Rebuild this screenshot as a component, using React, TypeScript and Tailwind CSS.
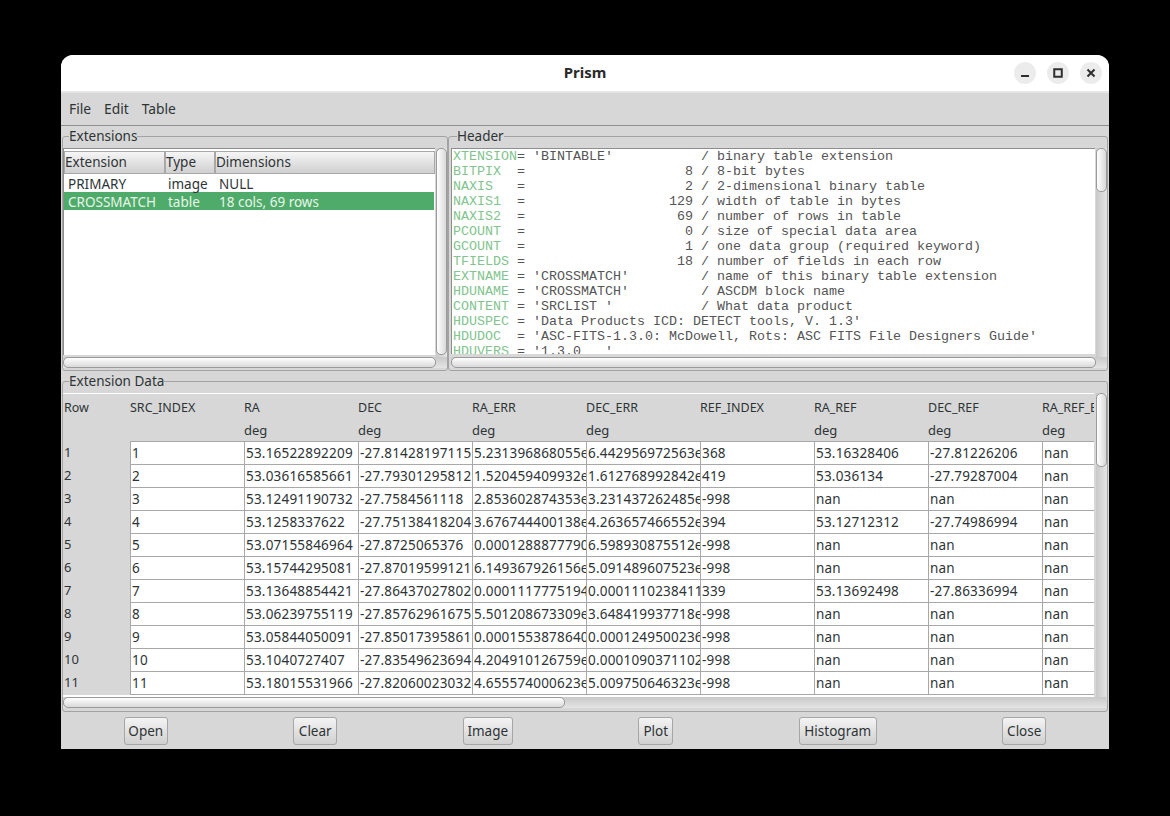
import React from "react";

const hdr: [string, string][] = [
  ["XTENSION", "= 'BINTABLE'           / binary table extension"],
  ["BITPIX  ", "=                    8 / 8-bit bytes"],
  ["NAXIS   ", "=                    2 / 2-dimensional binary table"],
  ["NAXIS1  ", "=                  129 / width of table in bytes"],
  ["NAXIS2  ", "=                   69 / number of rows in table"],
  ["PCOUNT  ", "=                    0 / size of special data area"],
  ["GCOUNT  ", "=                    1 / one data group (required keyword)"],
  ["TFIELDS ", "=                   18 / number of fields in each row"],
  ["EXTNAME ", "= 'CROSSMATCH'         / name of this binary table extension"],
  ["HDUNAME ", "= 'CROSSMATCH'         / ASCDM block name"],
  ["CONTENT ", "= 'SRCLIST '           / What data product"],
  ["HDUSPEC ", "= 'Data Products ICD: DETECT tools, V. 1.3'"],
  ["HDUDOC  ", "= 'ASC-FITS-1.3.0: McDowell, Rots: ASC FITS File Designers Guide'"],
  ["HDUVERS ", "= '1.3.0   '"],
];

const cols = ["SRC_INDEX", "RA", "DEC", "RA_ERR", "DEC_ERR", "REF_INDEX", "RA_REF", "DEC_REF", "RA_REF_ERR"];
const units = ["", "deg", "deg", "deg", "deg", "", "deg", "deg", "deg"];

const rows: string[][] = [
  ["1", "53.16522892209", "-27.81428197115", "5.231396868055e-05", "6.442956972563e-05", "368", "53.16328406", "-27.81226206", "nan"],
  ["2", "53.03616585661", "-27.79301295812", "1.520459409932e-05", "1.612768992842e-05", "419", "53.036134", "-27.79287004", "nan"],
  ["3", "53.12491190732", "-27.7584561118", "2.853602874353e-05", "3.231437262485e-05", "-998", "nan", "nan", "nan"],
  ["4", "53.1258337622", "-27.75138418204", "3.676744400138e-05", "4.263657466552e-05", "394", "53.12712312", "-27.74986994", "nan"],
  ["5", "53.07155846964", "-27.8725065376", "0.000128887779000", "6.598930875512e-05", "-998", "nan", "nan", "nan"],
  ["6", "53.15744295081", "-27.87019599121", "6.149367926156e-05", "5.091489607523e-05", "-998", "nan", "nan", "nan"],
  ["7", "53.13648854421", "-27.86437027802", "0.000111777519400", "0.000111023841100", "339", "53.13692498", "-27.86336994", "nan"],
  ["8", "53.06239755119", "-27.85762961675", "5.501208673309e-05", "3.648419937718e-05", "-998", "nan", "nan", "nan"],
  ["9", "53.05844050091", "-27.85017395861", "0.000155387864000", "0.000124950023600", "-998", "nan", "nan", "nan"],
  ["10", "53.1040727407", "-27.83549623694", "4.204910126759e-05", "0.000109037110200", "-998", "nan", "nan", "nan"],
  ["11", "53.18015531966", "-27.82060023032", "4.655574000623e-05", "5.009750646323e-05", "-998", "nan", "nan", "nan"],
];

const buttons: [string, string][] = [
  ["Open", "w-[44px]"],
  ["Clear", "w-[44px]"],
  ["Image", "w-[50px]"],
  ["Plot", "w-[35px]"],
  ["Histogram", "w-[78px]"],
  ["Close", "w-[44px]"],
];

function VBar({ thumb }: { thumb: string }) {
  return (
    <div className="w-[11px] shrink-0 bg-gradient-to-r from-[#c9c9c9] to-[#e4e4e4]">
      <div className={`${thumb} w-[11px] rounded-[5px] border border-[#9a9a9a] bg-gradient-to-r from-[#ffffff] to-[#d9d9d9]`} />
    </div>
  );
}

function HBar({ thumb }: { thumb: string }) {
  return (
    <div className="h-[11px] bg-gradient-to-b from-[#c9c9c9] to-[#e4e4e4]">
      <div className={`${thumb} h-[11px] rounded-[5px] border border-[#9a9a9a] bg-gradient-to-b from-[#ffffff] to-[#d9d9d9]`} />
    </div>
  );
}

function HeadCell({ w, children }: { w: string; children: React.ReactNode }) {
  return (
    <div className={`${w} shrink-0 h-[23px] leading-[21px] border border-[#a8a8a8] bg-gradient-to-b from-[#f6f6f6] to-[#cfcfcf]`}>
      {children}
    </div>
  );
}

function WinBtn({ children }: { children: React.ReactNode }) {
  return (
    <div className="w-[22px] h-[22px] rounded-full bg-[#ececec] flex items-center justify-center">{children}</div>
  );
}

function Btn({ label, w }: { label: string; w: string }) {
  return (
    <div className={`${w} h-[28px] flex items-center justify-center rounded-[3px] border border-[#a6a6a6] bg-gradient-to-b from-[#f4f4f4] to-[#d0d0d0] text-[13.5px]`}>
      {label}
    </div>
  );
}

export default function App() {
  return (
    <div className="w-[1170px] h-[816px] bg-black pt-[55px] pl-[61px] overflow-hidden font-['Noto_Sans',sans-serif] text-[13.5px] text-[#2e3436]">
      <div className="w-[1048px] h-[694px] flex flex-col rounded-t-[12px] overflow-hidden bg-[#d7d7d7]">
        {/* Title bar */}
        <div className="h-[38px] shrink-0 bg-white border-b-2 border-[#e6e6e6] flex items-center relative">
          <div className="flex-1 text-center font-bold text-[15px] text-[#2a2a2a] pb-[2px]">Prism</div>
          <div className="absolute right-[7px] top-[7px] flex gap-[11px]">
            <WinBtn>
              <svg width="10" height="10" viewBox="0 0 10 10"><rect x="1" y="7" width="8" height="2" fill="#2e2e2e" /></svg>
            </WinBtn>
            <WinBtn>
              <svg width="10" height="10" viewBox="0 0 10 10"><rect x="1.25" y="1.25" width="7.5" height="7.5" fill="none" stroke="#2e2e2e" strokeWidth="2" /></svg>
            </WinBtn>
            <WinBtn>
              <svg width="10" height="10" viewBox="0 0 10 10"><path d="M1.5 1.5L8.5 8.5M8.5 1.5L1.5 8.5" stroke="#2e2e2e" strokeWidth="2" /></svg>
            </WinBtn>
          </div>
        </div>
        {/* Menu */}
        <div className="h-[33px] shrink-0 border-b border-[#8e8e8e] flex items-center gap-[13px] pl-[8px] text-[13.8px]">
          <span>File</span>
          <span>Edit</span>
          <span>Table</span>
        </div>

        <div className="px-px pt-[2px] flex flex-col flex-1 min-h-0">
          {/* Upper */}
          <div className="flex h-[243px] shrink-0">
            <fieldset className="w-[386px] h-[243px] border border-[#a3a3a3] rounded-[3px] min-w-0">
              <legend className="ml-[6px] p-0 leading-[16px]">Extensions</legend>
              <div className="pt-[4px] flex flex-col">
                <div className="flex h-[209px]">
                  <div className="w-[373px] h-[207px] bg-white border-t border-l border-[#8e8e8e] pt-[2px]">
                    <div className="flex">
                      <HeadCell w="w-[101px]">Extension</HeadCell>
                      <HeadCell w="w-[50px]">Type</HeadCell>
                      <HeadCell w="w-[220px]">Dimensions</HeadCell>
                    </div>
                    <div className="flex h-[18px] leading-[20px] mr-[1px]">
                      <div className="w-[100px] pl-[4px]">PRIMARY</div>
                      <div className="w-[51px] pl-[4px]">image</div>
                      <div className="pl-[4px]">NULL</div>
                    </div>
                    <div className="flex h-[18px] leading-[20px] mr-[1px] bg-[#4fab69] text-[#e8f5ea]">
                      <div className="w-[100px] pl-[4px]">CROSSMATCH</div>
                      <div className="w-[51px] pl-[4px]">table</div>
                      <div className="pl-[4px]">18 cols, 69 rows</div>
                    </div>
                  </div>
                  <div className="w-[1px]" />
                  <VBar thumb="h-[207px]" />
                </div>
                <HBar thumb="w-[373px]" />
              </div>
            </fieldset>
            <fieldset className="w-[660px] h-[243px] border border-[#a3a3a3] rounded-[3px] min-w-0">
              <legend className="ml-[8px] p-0 leading-[16px]">Header</legend>
              <div className="pt-[4px] pl-[2px] flex flex-col">
                <div className="flex h-[209px]">
                  <div className="w-[644px] h-[206px] bg-white border-t border-l border-[#8e8e8e] overflow-hidden pl-[1px] font-['Liberation_Mono',monospace] text-[13.33px] leading-[15px] text-[#555555] whitespace-pre">
                    {hdr.map(([k, v]) => (
                      <div key={k} className="h-[15px]">
                        <span className="text-[#82c48e]">{k}</span>
                        {v}
                      </div>
                    ))}
                  </div>
                  <div className="w-[1px]" />
                  <VBar thumb="h-[44px]" />
                </div>
                <div>
                  <HBar thumb="w-[645px]" />
                </div>
              </div>
            </fieldset>
          </div>

          {/* Lower */}
          <fieldset className="mt-[2px] h-[339px] border border-[#a3a3a3] rounded-[3px] min-w-0">
            <legend className="ml-[6px] p-0 leading-[16px]">Extension Data</legend>
            <div className="pt-[4px]">
              <div className="flex h-[304px]">
                <div className="w-[1031px] h-[304px] border-t border-white overflow-hidden bg-[#d7d7d7] flex flex-col">
                  <div className="flex h-[24px] items-center text-[12.5px] pt-[5px] shrink-0">
                    <div className="w-[67px] shrink-0 pl-[1px]">Row</div>
                    {cols.map((c) => (
                      <div key={c} className="w-[114px] shrink-0 overflow-hidden whitespace-nowrap">{c}</div>
                    ))}
                  </div>
                  <div className="flex h-[23px] items-center text-[13px] pt-[2px] shrink-0">
                    <div className="w-[67px] shrink-0" />
                    {units.map((u, i) => (
                      <div key={i} className="w-[114px] shrink-0">{u}</div>
                    ))}
                  </div>
                  {rows.map((r, i) => (
                    <div key={i} className="flex h-[23px] shrink-0">
                      <div className="w-[67px] shrink-0 pl-[1px] leading-[22px] text-[13px]">{r[0]}</div>
                      {r.map((v, j) => (
                        <div
                          key={j}
                          className="w-[114px] h-[23px] shrink-0 overflow-hidden whitespace-nowrap bg-white border-l border-t border-[#a8a8a8] pl-[1px] leading-[23px] tracking-[0.2px]"
                        >
                          {v}
                        </div>
                      ))}
                    </div>
                  ))}
                  <div className="w-[1031px] ml-[67px] h-px shrink-0 bg-[#a8a8a8]" />
                  <div className="h-[2px] shrink-0 bg-white" />
                </div>
                <div className="w-[2px] shrink-0" />
                <VBar thumb="h-[74px]" />
              </div>
              <div className="h-[11px] pr-[1px]">
                <HBar thumb="w-[502px]" />
              </div>
            </div>
          </fieldset>
        </div>

        {/* Bottom buttons */}
        <div className="h-[37px] shrink-0 flex justify-around items-start pt-[5px]">
          {buttons.map(([b, w]) => (
            <Btn key={b} label={b} w={w} />
          ))}
        </div>
      </div>
    </div>
  );
}
